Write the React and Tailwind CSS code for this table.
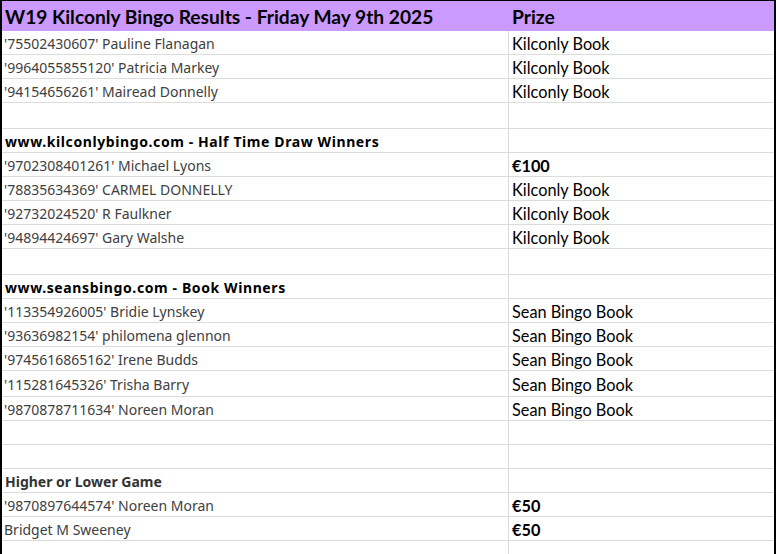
import React from "react";

const rows = [
  { name: "'75502430607' Pauline Flanagan", prize: "Kilconly Book" },
  { name: "'9964055855120' Patricia Markey", prize: "Kilconly Book" },
  { name: "'94154656261' Mairead Donnelly", prize: "Kilconly Book" },
  { blank: true, tall: true },
  { name: "www.kilconlybingo.com - Half Time Draw Winners", section: true, wide: true },
  { name: "'9702308401261' Michael Lyons", prize: "€100", bold: true },
  { name: "'78835634369' CARMEL DONNELLY", prize: "Kilconly Book" },
  { name: "'92732024520' R Faulkner", prize: "Kilconly Book" },
  { name: "'94894424697' Gary Walshe", prize: "Kilconly Book" },
  { blank: true, tall: true },
  { name: "www.seansbingo.com - Book Winners", section: true, wide: true },
  { name: "'113354926005' Bridie Lynskey", prize: "Sean Bingo Book" },
  { name: "'93636982154' philomena glennon", prize: "Sean Bingo Book" },
  { name: "'9745616865162' Irene Budds", prize: "Sean Bingo Book" },
  { name: "'115281645326' Trisha Barry", prize: "Sean Bingo Book", tall: true },
  { name: "'9870878711634' Noreen Moran", prize: "Sean Bingo Book" },
  { blank: true },
  { blank: true },
  { name: "Higher or Lower Game", section: true, grey: true },
  { name: "'9870897644574' Noreen Moran", prize: "€50", bold: true },
  { name: "Bridget M Sweeney", prize: "€50", bold: true },
  { blank: true },
];

const Row = ({ r }) => (
  <div
    className={`flex border-b border-[#dcdcdc] ${r.tall ? "h-[26px]" : "h-[24px]"}`}
  >
    <div
      className={`w-[506px] shrink-0 flex items-center pt-[2px] font-['Noto_Sans',sans-serif] text-[14px] ${
        r.section
          ? `font-bold pl-[3px] ${r.grey ? "text-[#333333]" : "text-black"} ${
              r.wide ? "tracking-[0.6px]" : ""
            }`
          : "pl-[2px] text-[#404040]"
      }`}
    >
      {r.name}
    </div>
    <div
      className={`flex-1 flex items-center pl-[3px] pt-[4px] border-l border-[#dcdcdc] font-['Lato',sans-serif] text-[16.3px] text-black ${
        r.bold ? "font-bold" : ""
      }`}
    >
      {r.prize}
    </div>
  </div>
);

export default function App() {
  return (
    <div className="w-[776px] h-[554px] overflow-hidden bg-white border-t border-l-2 border-r-2 border-black">
      {/* header */}
      <div className="flex h-[30px] pt-[2px] bg-[#cc99ff] font-['Lato',sans-serif] text-[19.2px] font-bold text-black">
        <div className="w-[506px] shrink-0 flex items-center pl-[3px]">
          W19 Kilconly Bingo Results - Friday May 9th 2025
        </div>
        <div className="flex-1 flex items-center pl-[4px]">Prize</div>
      </div>
      {rows.map((r, i) => (
        <Row key={i} r={r} />
      ))}
    </div>
  );
}
